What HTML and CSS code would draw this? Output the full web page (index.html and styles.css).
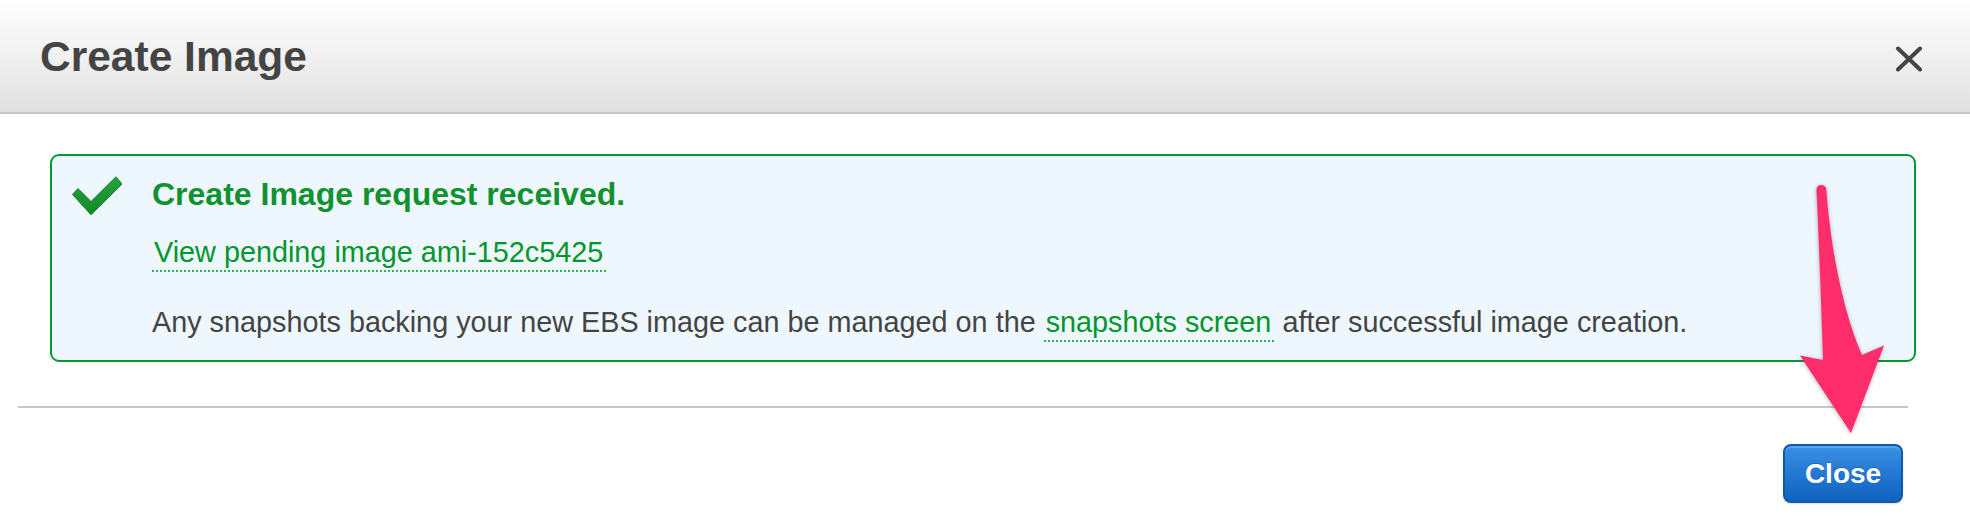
FILE: index.html
```html
<!DOCTYPE html>
<html lang="en">
<head>
<meta charset="utf-8">
<title>Create Image</title>
<link rel="stylesheet" href="styles.css">
</head>
<body>
<div class="modal">
  <div class="modal-header">
    <h1 class="modal-title">Create Image</h1>
    <button class="modal-close" aria-label="Close">
      <svg width="28" height="26" viewBox="0 0 28 26"><path d="M3 2.5 L25 23.5 M25 2.5 L3 23.5" stroke="#444" stroke-width="4" stroke-linecap="round" fill="none"/></svg>
    </button>
  </div>
  <div class="modal-body">
    <div class="alert">
      <div class="alert-icon">
        <svg width="50" height="40" viewBox="0 0 50 40">
          <defs>
            <linearGradient id="chk" x1="0" y1="0" x2="0" y2="1">
              <stop offset="0" stop-color="#22a33b"/>
              <stop offset="1" stop-color="#128a2a"/>
            </linearGradient>
          </defs>
          <path d="M0.5 18.5 L6 12.5 L19 25.5 L44 0.8 L50 8 L19 38.8 Z" fill="url(#chk)" stroke="#167f29" stroke-width="1" stroke-linejoin="round"/>
        </svg>
      </div>
      <div class="alert-content">
        <div class="alert-title">Create Image request received.</div>
        <div class="alert-link-row"><a class="alert-link" href="#">View pending image ami-152c5425</a></div>
        <div class="alert-text">Any snapshots backing your new EBS image can be managed on the <a class="alert-link" href="#">snapshots screen</a> after successful image creation.</div>
      </div>
    </div>
  </div>
  <div class="modal-footer">
    <button class="btn-primary">Close</button>
  </div>
</div>
<svg class="pointer-arrow" width="110" height="270" viewBox="0 0 110 270">
  <path d="M26.5 11 Q26 5 31.5 5 Q36.5 5 36.5 11 C40 62 52 130 72 175 L94 165.5 L61 253 L10 175.5 L33 180 C31 120 29 62 26.5 11 Z" fill="#ff2d6c"/>
</svg>
</body>
</html>
```

FILE: styles.css
```css
* {
  box-sizing: border-box;
}

html, body {
  margin: 0;
  padding: 0;
  background: #ffffff;
}

body {
  position: relative;
  width: 1970px;
  height: 520px;
  overflow: hidden;
  font-family: "Liberation Sans", Arial, Helvetica, sans-serif;
  color: #444444;
}

.modal-header {
  height: 114px;
  display: flex;
  align-items: flex-start;
  justify-content: space-between;
  padding: 33px 47px 0 40px;
  background: linear-gradient(to bottom, #fefefe 0%, #f2f2f2 45%, #e1e1e1 100%);
  border-bottom: 2px solid #c8c8c8;
}

.modal-title {
  margin: 0;
  font-size: 42.5px;
  line-height: 48px;
  font-weight: bold;
  color: #444444;
}

.modal-close {
  margin: 13px 0 0 0;
  padding: 0;
  border: 0;
  background: none;
  width: 28px;
  height: 26px;
  display: block;
}

.modal-close svg {
  display: block;
}

.modal-body {
  padding: 40px 54px 0 50px;
}

.alert {
  display: flex;
  align-items: flex-start;
  border: 2px solid #07982e;
  border-radius: 9px;
  background: #eff7fe;
  padding: 20px 20px 20px 20px;
  min-height: 208px;
}

.alert-icon {
  width: 50px;
  height: 40px;
  flex: none;
  margin-right: 30px;
}

.alert-icon svg {
  display: block;
}

.alert-content {
  display: flex;
  flex-direction: column;
}

.alert-title {
  font-size: 32px;
  line-height: 36px;
  font-weight: bold;
  color: #0f922f;
}

.alert-link-row {
  margin-top: 22px;
  font-size: 28.8px;
  line-height: 36px;
}

.alert-text {
  margin-top: 34px;
  font-size: 28.8px;
  line-height: 36px;
  color: #444444;
}

.alert-link {
  color: #02962d;
  text-decoration: none;
  padding: 0 3px 2px 2px;
  border-bottom: 2px dotted #3aae55;
}

.modal-footer {
  margin: 44px 62px 0 18px;
  border-top: 2px solid #c8c8c8;
  padding: 36px 5px 0 0;
  display: flex;
  justify-content: flex-end;
}

.btn-primary {
  width: 120px;
  height: 59px;
  padding: 0;
  border: 2px solid #0c5aae;
  border-radius: 8px;
  background: linear-gradient(to bottom, #3a90e4 0%, #2478d3 50%, #0f63bf 100%);
  box-shadow: inset 0 2px 0 rgba(255, 255, 255, 0.18), 0 1px 2px rgba(0, 0, 0, 0.15);
  color: #ffffff;
  font-family: "Liberation Sans", Arial, Helvetica, sans-serif;
  font-size: 28px;
  font-weight: bold;
  line-height: 55px;
  text-shadow: 0 -1px 0 rgba(0, 0, 0, 0.2);
}

.pointer-arrow {
  position: absolute;
  left: 1790px;
  top: 180px;
  filter: drop-shadow(0 1px 2px rgba(0, 0, 0, 0.3));
}
```
